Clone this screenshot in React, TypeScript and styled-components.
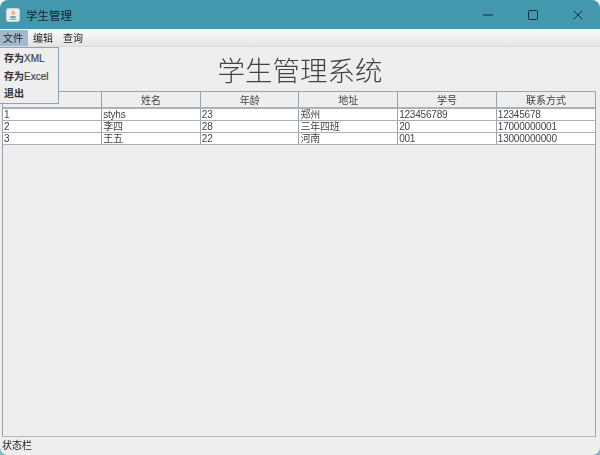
import React from "react";
import styled, { createGlobalStyle } from "styled-components";

const Global = createGlobalStyle`
  html, body { margin: 0; padding: 0; width: 600px; height: 455px; overflow: hidden; background: linear-gradient(180deg, #f4f6f6 0, #f4f6f6 50%, #7fb9c6 100%); }
  #root { width: 600px; height: 455px; }
`;
const Windowed = styled.div`
  width: 600px; height: 455px; display: flex; flex-direction: column; position: relative;
  border-radius: 8px; overflow: hidden; background: #eeeeee;
  font-family: "Liberation Sans", "Noto Sans CJK SC", sans-serif; color: #333;
  filter: blur(0.25px);
`;
const TitleBar = styled.header`
  height: 29px; flex: none; background: #4398ad; display: flex; align-items: center; padding-left: 6px;
`;
const AppIcon = styled.svg`width: 14px; height: 14px; flex: none;`;
const TitleText = styled.span`
  margin-left: 6px; font-size: 11.5px; color: #10222a; flex: 1; font-family: "Noto Sans CJK SC", sans-serif;
`;
const WinButton = styled.div`
  width: 45px; height: 29px; display: flex; align-items: center; justify-content: center;
`;
const MenuBar = styled.nav`
  flex: none; display: flex; border-top: 1px solid #f6f8f8; height: 16px;
  background: linear-gradient(180deg, #fbfbfb 0%, #e4e4e4 100%);
  border-bottom: 1px solid #dcdcdc;
`;
const MenuItem = styled.div<{ $open?: boolean }>`
  height: 16px; line-height: 16px; padding: 0 5px 0 ${p => (p.$open ? 3 : 5)}px; font-size: 10px; color: #222;
  background: ${p => (p.$open ? "#a3b8cc" : "transparent")};
  font-family: "Noto Sans CJK SC", sans-serif;
`;
const Popup = styled.div`
  position: absolute; left: -1px; top: 47px; width: 60px; height: 57px; box-sizing: border-box;
  background: #eeeeee; border: 1px solid #8ea1bd; z-index: 2; padding-top: 2px;
`;
const PopupItem = styled.div`
  height: 17.5px; line-height: 17px; padding-left: 4px; font-size: 10px; font-weight: 700; color: #333;
`;
const Latin = styled.span`font-weight: 400; -webkit-text-stroke: 0.2px #444; color: #444;`;
const Heading = styled.h1`
  margin: 0; height: 44px; flex: none; text-align: center; font-size: 27.5px; line-height: 44px; font-weight: 300;
  color: #444; font-family: "Noto Sans CJK SC", serif;
`;
const TableBox = styled.section`
  margin: 0 4px 0 2px; height: 346px; flex: none; box-sizing: border-box;
  border: 1px solid #9aa4ae; border-bottom-color: #b5b8bc;
`;
const Grid = styled.table`
  width: 100%; table-layout: fixed; border-collapse: collapse; font-size: 10px; color: #444;
`;
const HeadCell = styled.th`
  height: 15px; padding: 0; background: #eeeeee; font-weight: 400; text-align: center; font-size: 10px;
  border-right: 1px solid #9aa4ae; border-bottom: 2px solid #a9b1ba; color: #444;
  &:last-child { border-right: none; }
`;
const Cell = styled.td`
  height: 11px; padding: 0 0 0 1px; line-height: 11px; background: #fff; white-space: nowrap; overflow: hidden;
  border-right: 1px solid #9aa4ae; border-bottom: 1px solid #a9b1ba; font-size: 10px; letter-spacing: -0.2px;
  &:last-child { border-right: none; }
`;
const Spacer = styled.div`flex: 1;`;
const StatusBar = styled.footer`
  height: 18px; flex: none; padding-left: 2px; font-size: 10px; line-height: 15px; color: #222;
  font-family: "Noto Sans CJK SC", sans-serif;
`;

const columns = ["", "姓名", "年龄", "地址", "学号", "联系方式"];
const rows = [
  ["1", "styhs", "23", "郑州", "123456789", "12345678"],
  ["2", "李四", "28", "三年四班", "20", "17000000001"],
  ["3", "王五", "22", "河南", "001", "13000000000"],
];

export default function App() {
  return (
    <Windowed>
      <Global />
      <TitleBar>
        <AppIcon viewBox="0 0 14 14">
          <rect x="0.5" y="0.5" width="13" height="13" rx="2" fill="#e9edf0" stroke="#c8d2d8" />
          <path d="M7 2.5c1 1.5-1.5 2.2-.5 4 M8.5 4c.4 1-1 1.4-.4 2.6" stroke="#d9762c" strokeWidth="1" fill="none" />
          <path d="M4 8h6l-.7 2.6H4.7z" fill="#8a9fb8" />
          <path d="M3.5 11.5h7" stroke="#d9a070" strokeWidth="1" />
        </AppIcon>
        <TitleText>学生管理</TitleText>
        <WinButton>
          <svg width="10" height="10" viewBox="0 0 10 10"><path d="M0 5h10" stroke="#10303c" strokeWidth="1" /></svg>
        </WinButton>
        <WinButton>
          <svg width="10" height="10" viewBox="0 0 10 10"><rect x="0.5" y="0.5" width="9" height="9" rx="1" fill="none" stroke="#10303c" strokeWidth="1" /></svg>
        </WinButton>
        <WinButton>
          <svg width="10" height="10" viewBox="0 0 10 10"><path d="M0.5 0.5l9 9M9.5 0.5l-9 9" stroke="#10303c" strokeWidth="1" /></svg>
        </WinButton>
      </TitleBar>
      <MenuBar>
        <MenuItem $open>文件</MenuItem>
        <MenuItem>编辑</MenuItem>
        <MenuItem>查询</MenuItem>
      </MenuBar>
      <Popup>
        <PopupItem>存为<Latin>XML</Latin></PopupItem>
        <PopupItem>存为<Latin>Excel</Latin></PopupItem>
        <PopupItem>退出</PopupItem>
      </Popup>
      <Heading>学生管理系统</Heading>
      <TableBox>
        <Grid>
          <thead>
            <tr>{columns.map((c, i) => <HeadCell key={i}>{c}</HeadCell>)}</tr>
          </thead>
          <tbody>
            {rows.map((r, i) => (
              <tr key={i}>{r.map((c, j) => <Cell key={j}>{c}</Cell>)}</tr>
            ))}
          </tbody>
        </Grid>
      </TableBox>
      <Spacer />
      <StatusBar>状态栏</StatusBar>
    </Windowed>
  );
}
